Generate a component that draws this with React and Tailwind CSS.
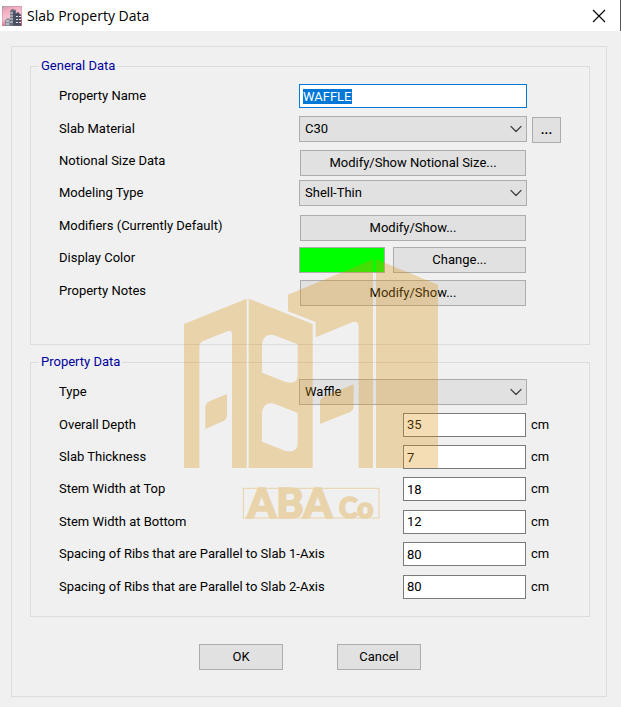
import { useEffect, useRef } from "react"
import { ChevronDown } from "lucide-react"

const dimensions = [
  { id: "overallDepth", label: "Overall Depth", value: 35 },
  { id: "slabThickness", label: "Slab Thickness", value: 7 },
  { id: "stemTop", label: "Stem Width at Top", value: 18 },
  { id: "stemBottom", label: "Stem Width at Bottom", value: 12 },
  { id: "ribs1", label: "Spacing of Ribs that are Parallel to Slab 1-Axis", value: 80 },
  { id: "ribs2", label: "Spacing of Ribs that are Parallel to Slab 2-Axis", value: 80 },
]

function AppIcon() {
  return (
    <svg viewBox="0 0 20 20" className="w-5 h-5 shrink-0" aria-hidden="true">
      <defs>
        <linearGradient id="sky" x1="0" y1="0" x2="0.4" y2="1">
          <stop offset="0" stopColor="#b9a3b0" />
          <stop offset="0.25" stopColor="#f3a9bd" />
          <stop offset="0.6" stopColor="#f7c3d0" />
          <stop offset="1" stopColor="#e8547e" />
        </linearGradient>
      </defs>
      <rect width="20" height="20" fill="url(#sky)" />
      <path d="M3 20V14l3-2 3 2v6z" fill="#8b8f9c" />
      <path d="M8 20V5l2-2 4 1v16z" fill="#6b7180" />
      <path d="M13 20V8l3-2 3 3v11z" fill="#4a5060" />
      <path d="M8 7h3M8 10h3M8 13h3M8 16h3M4 15h3M4 18h3M14 10.5h2M17 10.5h2M14 13.5h2M17 13.5h2M14 16.5h2M17 16.5h2" stroke="#dfe3ea" />
      <path d="M12 5v15" stroke="#2d3340" />
      <path d="M0 0h20v20H0z" fill="none" stroke="#8d8790" strokeWidth="0.6" />
    </svg>
  )
}

function Watermark() {
  return (
    <svg
      viewBox="0 0 840 840"
      className="absolute left-[170px] top-[219px] w-[280px] h-[280px] pointer-events-none"
      aria-hidden="true"
    >
      <g fill="#dc9410" fillRule="evenodd" opacity="0.31">
        {/* Left tower */}
        <path d="M42 222 230 146V654H186V252Q186 240 174 243L101 272Q88 277 88 290V654H42z" />
        <path d="M106 537V475Q106 459 120 453L171 432V495Q171 508 158 514z" />
        {/* Middle tower with two windows */}
        <path d="M236 146 428 222V654H236zM276 285V368L347 396Q383 405 383 374V283L317 257C292 247 276 264 276 285zM276 491V575L347 603Q383 610 383 580V489L317 463C292 453 276 470 276 491z" />
        {/* Right tower */}
        <path d="M354 134 609 28V654H566V230Q566 212 548 216L437 262V216L354 184z" />
        <path d="M450 522V458Q450 444 464 438L551 403V469Q551 481 538 487z" />
        <path d="M618 28 804 104V654H618z" />
        <rect x="220" y="715" width="407" height="89" fill="none" stroke="#dc9410" strokeWidth="3" />
        <g stroke="#dc9410" strokeWidth="5" fontWeight="900" fontFamily="Lato, sans-serif">
          <text x="232" y="803" fontSize="124">ABA</text>
          <text x="507" y="803" fontSize="84">Co</text>
        </g>
      </g>
    </svg>
  )
}

function Row({ label, htmlFor, children, after }) {
  return (
    <div className="flex items-center">
      <label htmlFor={htmlFor} className="flex-1 min-w-0 whitespace-nowrap">
        {label}
      </label>
      <div className="w-[228px] shrink-0 flex justify-end">{children}</div>
      <div className="w-[62px] shrink-0 pl-1">{after}</div>
    </div>
  )
}

function Button({ className = "", ...props }) {
  return (
    <button
      type="button"
      className={`h-[26px] bg-[#e1e1e1] border border-[#adadad] hover:border-[#0078d7] ${className}`}
      {...props}
    />
  )
}

function Select({ id, value }) {
  return (
    <div className="relative w-full">
      <select
        id={id}
        defaultValue={value}
        className="appearance-none w-full h-[26px] px-[5px] bg-[#e1e1e1] border border-[#adadad] rounded-none"
      >
        <option>{value}</option>
      </select>
      <ChevronDown className="absolute right-[1px] top-[3px] w-5 h-5 text-[#444] pointer-events-none" strokeWidth={1.5} />
    </div>
  )
}

function Group({ title, className, children }) {
  return (
    <fieldset className={`min-w-0 border border-[#dcdcdc] pt-1 pl-7 ${className}`}>
      <legend className="-ml-5 px-[2px] leading-5 text-[#00009c]">{title}</legend>
      <div className="grid grid-cols-1 auto-rows-fr min-h-[227px]">{children}</div>
    </fieldset>
  )
}

export default function App() {
  const nameRef = useRef(null)

  // The name is ready to be overwritten when the dialog opens
  useEffect(() => {
    nameRef.current.focus()
    nameRef.current.select()
  }, [])

  return (
    <div className="min-h-screen flex flex-col bg-[#f0f0f0] text-black text-[13px] leading-5 font-[Roboto,sans-serif]">
      <header className="h-[31px] flex items-center bg-white border-r border-[#555] pl-[2px] pr-[14px]">
        <AppIcon />
        <h1 className="flex-1 pl-[5px] text-[14px] font-['Open_Sans',sans-serif]">Slab Property Data</h1>
        <button type="button" aria-label="Close">
          <svg viewBox="0 0 14 14" className="w-[14px] h-[14px]" stroke="#000" strokeWidth="1.1">
            <path d="M1 1 13 13M13 1 1 13" />
          </svg>
        </button>
      </header>

      <main className="relative flex-1 flex flex-col pt-[15px] pl-[11px] pr-[14px] pb-[10px]">
        <form className="flex-1 border border-[#dcdcdc] pt-[9px] pl-[18px] pr-4">
          <Group title="General Data" className="pb-[37px]">
            <Row label="Property Name" htmlFor="name">
              <input
                ref={nameRef}
                id="name"
                type="text"
                defaultValue="WAFFLE"
                className="w-full h-6 px-[3px] bg-white border border-[#0078d7] outline-none selection:bg-[#0078d7] selection:text-white"
              />
            </Row>
            <Row
              label="Slab Material"
              htmlFor="material"
              after={
                <Button className="w-[29px] mt-[2px] ml-[1px] font-bold" aria-label="Edit materials">
                  ...
                </Button>
              }
            >
              <Select id="material" value="C30" />
            </Row>
            <Row label="Notional Size Data" htmlFor="notional">
              <Button id="notional" className="w-[226px] mt-1 mr-[1px]">Modify/Show Notional Size...</Button>
            </Row>
            <Row label="Modeling Type" htmlFor="modeling">
              <Select id="modeling" value="Shell-Thin" />
            </Row>
            <Row label="Modifiers (Currently Default)" htmlFor="modifiers">
              <Button id="modifiers" className="w-[226px] mt-1 mr-[1px]">Modify/Show...</Button>
            </Row>
            <Row label="Display Color" htmlFor="color">
              <div className="flex-1 flex gap-2 mt-1 mr-[1px]">
                <div className="w-[86px] h-[26px] bg-[#00ff00] border border-[#adadad]" />
                <Button id="color" className="flex-1">Change...</Button>
              </div>
            </Row>
            <Row label="Property Notes" htmlFor="notes">
              <Button id="notes" className="w-[226px] mt-1 mr-[1px]">Modify/Show...</Button>
            </Row>
          </Group>

          <Group title="Property Data" className="mt-[7px] pb-[13px]">
            <Row label="Type" htmlFor="type">
              <Select id="type" value="Waffle" />
            </Row>
            {dimensions.map((dim) => (
              <Row key={dim.id} label={dim.label} htmlFor={dim.id} after="cm">
                <input
                  id={dim.id}
                  type="text"
                  defaultValue={dim.value}
                  className="w-[123px] h-6 mr-[1px] px-[3px] bg-white border border-[#7a7a7a] outline-none"
                />
              </Row>
            ))}
          </Group>

          <div className="flex justify-center gap-[54px] pt-[27px] pb-[25px]">
            <Button className="w-[84px]">OK</Button>
            <Button className="w-[84px]">Cancel</Button>
          </div>
        </form>
        <Watermark />
      </main>
    </div>
  )
}
